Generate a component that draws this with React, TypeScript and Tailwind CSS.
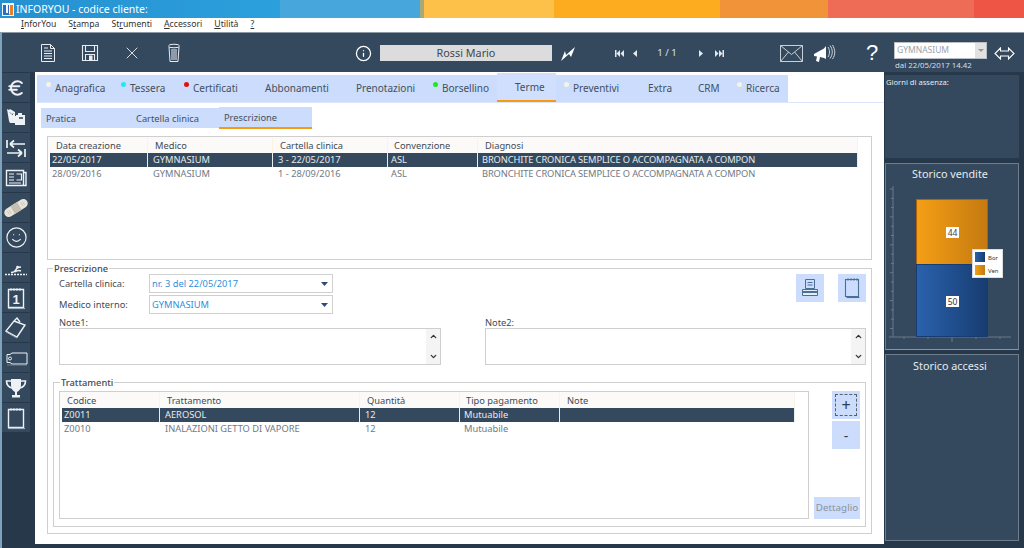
import React from "react";
import { Info, X, Euro, Smile, ChevronUp, ChevronDown } from "lucide-react";

const FONT = { fontFamily: '"Noto Sans", "Open Sans", sans-serif' };

function Dot({ c }: { c: string }) {
  return <span className="absolute left-[-9px] top-[1px] h-[5px] w-[5px] rounded-full" style={{ background: c }} />;
}

const tabs: [string, number, number, string?][] = [
  ["Anagrafica", 85, 18, "#f4f4e6"],
  ["Tessera", 63, 8, "#22e6f2"],
  ["Certificati", 71, 8, "#e01010"],
  ["Abbonamenti", 91, 9],
  ["Prenotazioni", 86, 9],
  ["Borsellino", 64, 9, "#22e622"],
  ["Terme", 59, 18, "#f4f4e6"],
  ["Preventivi", 84, 17, "#f4f4e6"],
  ["Extra", 50, 8],
  ["CRM", 48, 8],
  ["Ricerca", 50, 8, "#f4f4e6"],
];

function TabBar() {
  return (
    <div className="ml-[2px] flex h-[30px] items-end border-b border-[#dbe6fb] text-[10px]">
      <div className="flex h-[27px] w-[751px] items-stretch bg-[#cbdcfd]">
        {tabs.map(([t, w, p, c], i) => (
          <div
            key={t}
            className={
              i === 6
                ? "mt-[-2px] flex h-[29px] items-center border-b-2 border-[#f59a12] bg-[#cfdffd] pt-[2px] text-[#44505c]"
                : "flex items-center text-[#44505c]"
            }
            style={{ width: w, paddingLeft: p }}
          >
            <span className="relative whitespace-nowrap">
              {c && i !== 6 ? <Dot c={c} /> : null}
              {t}
            </span>
          </div>
        ))}
      </div>
    </div>
  );
}

function SubTabs() {
  return (
    <div className="ml-[6px] mt-[4px] flex h-[22px] items-stretch">
      <div className="mt-[1px] flex h-[20px] w-[178px] items-center bg-[#cbdcfd] pt-px text-[#44505c]">
        <span className="ml-[5px] w-[90px]">Pratica</span>
        <span>Cartella clinica</span>
      </div>
      <div className="flex h-[22px] w-[93px] items-center border-b-2 border-[#f59a12] bg-[#cbdcfd] pl-[5px] pt-px text-[#44505c]">
        Prescrizione
      </div>
    </div>
  );
}

type Col = { t: string; w: number; hp: number; cp: number; narrow?: boolean };

function Grid({ cols, rows, rowW, left }: { cols: Col[]; rows: string[][]; rowW: number; left: number }) {
  return (
    <div>
      <div className="flex h-[16px] items-center bg-[#fbfaf8] pt-px text-[#3f4a55]" style={{ width: rowW + left }}>
        <div style={{ width: left }} />
        {cols.map((c) => (
          <div key={c.t} className="flex h-full items-center whitespace-nowrap border-r border-[#fbf2df]" style={{ width: c.w, paddingLeft: c.hp }}>
            {c.t}
          </div>
        ))}
      </div>
      {rows.map((r, i) => (
        <div key={i} className="flex h-[14px] items-center" style={{ marginLeft: left, width: rowW }}>
          {r.map((v, j) => (
            <div
              key={j}
              className={
                (i === 0
                  ? "flex h-full items-center overflow-hidden whitespace-nowrap border-r border-[#e8edf2] bg-[#34495e] text-[#e6ebef]"
                  : "flex h-full items-center overflow-hidden whitespace-nowrap text-[#707a83]") +
                (cols[j].narrow ? " tracking-[-0.12px]" : "")
              }
              style={{ width: cols[j].w, paddingLeft: cols[j].cp }}
            >
              {v}
            </div>
          ))}
        </div>
      ))}
    </div>
  );
}

function SelectBox({ v }: { v: string }) {
  return (
    <div className="flex h-[19px] w-[184px] items-center justify-between border border-[#d0d0d0] bg-white pl-[2px] pr-[4px] text-[#2f8fdc]">
      <span>{v}</span>
      <svg width="7" height="4" viewBox="0 0 7 4"><path d="M0 0h7L3.5 4z" fill="#2f4a78" /></svg>
    </div>
  );
}

function NoteBox({ w }: { w: number }) {
  return (
    <div className="flex h-[37px] justify-end border border-[#cfcfcf] bg-white" style={{ width: w }}>
      <div className="flex w-[14px] flex-col items-center justify-between bg-[#f4f4f4] py-[3px] text-[#333]">
        <ChevronUp size={9} strokeWidth={3.5} />
        <ChevronDown size={9} strokeWidth={3.5} />
      </div>
    </div>
  );
}

function Main() {
  return (
    <div className="h-[472px] w-[849px] bg-white pt-[1px] text-[9.3px]">
      <TabBar />
      <SubTabs />
      <div className="ml-[12px] mt-[7px] h-[124px] w-[825px] border border-[#cfcfcf]">
        <Grid
          left={2}
          rowW={808}
          cols={[
            { t: "Data creazione", w: 98, hp: 6, cp: 2 },
            { t: "Medico", w: 125, hp: 7, cp: 5 },
            { t: "Cartella clinica", w: 115, hp: 7, cp: 5 },
            { t: "Convenzione", w: 90, hp: 6, cp: 3 },
            { t: "Diagnosi", w: 380, hp: 7, cp: 4, narrow: true },
          ]}
          rows={[
            ["22/05/2017", "GYMNASIUM", "3 - 22/05/2017", "ASL", "BRONCHITE CRONICA SEMPLICE O ACCOMPAGNATA A COMPON"],
            ["28/09/2016", "GYMNASIUM", "1 - 28/09/2016", "ASL", "BRONCHITE CRONICA SEMPLICE O ACCOMPAGNATA A COMPON"],
          ]}
        />
      </div>
      <fieldset className="ml-[12px] mt-[3px] h-[271px] w-[825px] border border-[#cfcfcf] pl-[11px] pr-[5px]">
        <legend className="ml-[-6px] px-[1px] font-medium leading-[11px] text-[#3f4a55]">Prescrizione</legend>
        <div className="flex items-start justify-between">
          <div>
            <div className="flex items-center text-[#3f4a55]">
              <span className="w-[90px]">Cartella clinica:</span>
              <SelectBox v="nr. 3 del 22/05/2017" />
            </div>
            <div className="mt-[2px] flex items-center text-[#3f4a55]">
              <span className="w-[90px]">Medico interno:</span>
              <SelectBox v="GYMNASIUM" />
            </div>
          </div>
          <div className="flex gap-[14px]">
            <button className="flex h-[28px] w-[28px] items-center justify-center bg-[#cbdcfd]">
              <svg width="18" height="20" viewBox="0 0 18 20" fill="none" stroke="#4a6f94" strokeWidth="1">
                <path d="M4.5 1.5h9v9h-9zM6.5 4.5h5M6.5 7h5" />
                <path d="M1.5 11.5h15v6h-15z" fill="#e4ecf8" />
                <path d="M1.5 14h15" strokeWidth="2" />
              </svg>
            </button>
            <button className="flex h-[28px] w-[28px] items-center justify-center bg-[#cbdcfd]">
              <svg width="16" height="22" viewBox="0 0 16 22" fill="none" stroke="#4a6f94" strokeWidth="1.1">
                <path d="M1.5 2.5h13v17h-13z" />
                <path d="M2.5 20.5h13" />
                <path d="M4 1v3M7 1v3M10 1v3M13 1v3" strokeWidth="0.8" />
              </svg>
            </button>
          </div>
        </div>
        <div className="flex pt-[3px] text-[#3f4a55]">
          <div className="w-[426px]">
            <div className="h-[11px] leading-[11px]">Note1:</div>
            <NoteBox w={382} />
          </div>
          <div>
            <div className="h-[11px] leading-[11px]">Note2:</div>
            <NoteBox w={381} />
          </div>
        </div>
        <fieldset className="ml-[-6px] mt-[12px] h-[150px] w-[813px] border border-[#cfcfcf] pl-[5px]">
          <legend className="ml-[1px] px-[1px] font-medium leading-[11px] text-[#3f4a55]">Trattamenti</legend>
          <div className="mt-[3px] flex">
            <div className="h-[128px] w-[750px] shrink-0 border border-[#cfcfcf]">
              <Grid
                left={2}
                rowW={733}
                cols={[
                  { t: "Codice", w: 98, hp: 5, cp: 2 },
                  { t: "Trattamento", w: 200, hp: 7, cp: 5 },
                  { t: "Quantità", w: 100, hp: 7, cp: 5 },
                  { t: "Tipo pagamento", w: 100, hp: 6, cp: 4 },
                  { t: "Note", w: 235, hp: 7, cp: 7 },
                ]}
                rows={[
                  ["Z0011", "AEROSOL", "12", "Mutuabile", ""],
                  ["Z0010", "INALAZIONI GETTO DI VAPORE", "12", "Mutuabile", ""],
                ]}
              />
            </div>
            <div className="ml-[5px] flex h-[128px] w-[46px] flex-col items-end">
              <button className="flex h-[28px] w-[28px] items-center justify-center bg-[#cbdcfd] text-[16px] text-[#2e3f50]">
                <span className="flex h-[22px] w-[22px] items-center justify-center border border-dashed border-[#55606b]">+</span>
              </button>
              <button className="mt-[2px] flex h-[28px] w-[28px] items-center justify-center bg-[#cbdcfd] text-[14px] text-[#2e3f50]">-</button>
              <button className="mt-auto flex h-[22px] w-[46px] items-center justify-center bg-[#cbdcfd] text-[9.8px] text-[#8a939b]">Dettaglio</button>
            </div>
          </div>
        </fieldset>
      </fieldset>
    </div>
  );
}

const white = "#eef2f5";

function SideIcon({ i }: { i: number }) {
  const p = { fill: "none", stroke: white, strokeWidth: 1.4 } as const;
  const s = { width: 24, height: 24, viewBox: "0 0 24 24" };
  switch (i) {
    case 0:
      return <Euro size={20} color={white} strokeWidth={2.4} />;
    case 1:
      return (
        <svg {...s}>
          <path d="M3 3l2 1 1-1 5 3v4h1V9h2V7h4v2h3v10H11v-2H6l-1-2-1-6z" fill={white} />
          <path d="M6 6.5l1 1M9 7.5l-1 1.5" stroke="#34495e" strokeWidth="1" />
          <path d="M15 12h4" stroke="#34495e" strokeWidth="1.6" />
        </svg>
      );
    case 2:
      return (
        <svg {...s}>
          <path d="M3 4v8M21 8H6M6 8l4-3.5M6 8l4 3.5M3 17h15M18 17l-4-3.5M18 17l-4 3.5M21 13v8" {...p} strokeWidth={1.7} />
        </svg>
      );
    case 3:
      return (
        <svg {...s}>
          <path d="M2.5 4.5h17v15h-17zM19.5 6.5h2.5v13h-2.5" {...p} />
          <path d="M5 8h5M5 11h5M5 14h5M5 17h12M12.5 8h5v6h-5" {...p} strokeWidth={1.2} />
        </svg>
      );
    case 4:
      return (
        <svg {...s}>
          <g transform="rotate(-32 12 12)">
            <rect x="-1" y="7.5" width="26" height="9" rx="4.5" fill="#e8e4da" />
            <rect x="8" y="7.5" width="8" height="9" fill="#c4bfb0" />
            <path d="M3 10v4M5 10v4M19 10v4M21 10v4" stroke="#c4bfb0" strokeWidth="0.8" />
          </g>
        </svg>
      );
    case 5:
      return <Smile size={23} color={white} strokeWidth={1.2} />;
    case 6:
      return (
        <svg {...s}>
          <path d="M1 18.5h22" stroke={white} strokeWidth="1.3" strokeDasharray="2 1" />
          <path d="M7 16.5c3 0 4-.5 5-3s3-2.5 5-2.5M11 16c2-1.5 4-2 6-1" {...p} strokeWidth={1.5} />
          <circle cx="13.5" cy="11" r="1.3" fill={white} />
        </svg>
      );
    case 7:
      return (
        <svg {...s}>
          <path d="M4.5 3.5h15v18h-15z" {...p} />
          <path d="M4 22.5h17" stroke="#9fb0c0" strokeWidth="1.2" />
          <path d="M7 2v3M10 2v3M13 2v3M16 2v3" stroke={white} strokeWidth="0.8" />
          <text x="12" y="18" textAnchor="middle" fontSize="13" fontWeight="700" fill={white} fontFamily="Liberation Sans, sans-serif">1</text>
        </svg>
      );
    case 8:
      return (
        <svg {...s}>
          <path d="M10 5l11 4-8 12-11-6zM10 5l3-3 3 4" {...p} />
          <path d="M2 16l11 6" stroke="#9fb0c0" strokeWidth="1" />
        </svg>
      );
    case 9:
      return (
        <svg {...s}>
          <path d="M8 7h15v11H8l-2-1.5H3V8.5h3z" {...p} strokeWidth={1} />
          <circle cx="6" cy="12.5" r="1.5" {...p} strokeWidth={1} />
          <path d="M3 19h20" stroke="#7f90a0" strokeWidth="0.8" />
        </svg>
      );
    case 10:
      return (
        <svg {...s}>
          <path d="M7 3h10v6c0 4-2 6-4 7v3h3v2.5H8V19h3v-3c-2-1-4-3-4-7z" fill={white} />
          <path d="M7 5H2.5c0 4 2 6 5.5 7M17 5h4.500c0 4-2 6-5.500 7" {...p} strokeWidth={1.6} />
        </svg>
      );
    default:
      return (
        <svg {...s}>
          <path d="M4.5 3.5h15v18h-15z" {...p} />
          <path d="M4 22.5h17" stroke="#9fb0c0" strokeWidth="1.2" />
          <path d="M7 2v3M10 2v3M13 2v3M16 2v3" stroke={white} strokeWidth="0.8" />
        </svg>
      );
  }
}

function Sidebar() {
  return (
    <div className="flex w-[33px] shrink-0 flex-col pt-px">
      {Array.from({ length: 12 }).map((_, i) => (
        <div key={i} className="mb-px flex h-[29px] w-[28px] items-center justify-center bg-[#34495e]">
          <SideIcon i={i} />
        </div>
      ))}
    </div>
  );
}

function Chart() {
  const ticks: number[] = [];
  for (let i = 0; i < 16; i++) ticks.push(189 + i * 9.3);
  return (
    <svg width="132" height="160" viewBox="886 186 132 160" className="mt-[5px] block">
      <defs>
        <linearGradient id="o" x1="0" x2="1" y1="0" y2="0">
          <stop offset="0" stopColor="#f59f16" />
          <stop offset="1" stopColor="#c57a10" />
        </linearGradient>
        <linearGradient id="b" x1="0" x2="1" y1="0" y2="0">
          <stop offset="0" stopColor="#2a62ad" />
          <stop offset="1" stopColor="#173c70" />
        </linearGradient>
      </defs>
      <path d="M893 186v151M889 337h122" stroke="#66788a" strokeWidth="1" fill="none" />
      {ticks.map((y, i) => (
        <path key={i} d={`M${i % 3 === 0 ? 890 : 891} ${y}h3`} stroke="#66788a" />
      ))}
      <path d="M904 337v2M928 337v2M952 337v5M976 337v2M1000 337v2" stroke="#66788a" />
      <rect x="916.5" y="199.5" width="71" height="65" fill="url(#o)" stroke="#a8650c" />
      <rect x="916.5" y="264.5" width="71" height="72" fill="url(#b)" stroke="#173c70" />
      <rect x="946" y="227" width="13" height="11" fill="#fff" />
      <text x="952.5" y="235.5" fontSize="8.5" textAnchor="middle" fill="#444" fontFamily="Noto Sans, sans-serif">44</text>
      <rect x="946" y="296" width="13" height="11" fill="#fff" />
      <text x="952.5" y="304.5" fontSize="8.5" textAnchor="middle" fill="#333" fontFamily="Noto Sans, sans-serif">50</text>
      <rect x="972.5" y="249.5" width="30" height="28" fill="#fff" stroke="#ddd" />
      <rect x="975" y="252" width="10" height="10" fill="url(#b)" />
      <rect x="975" y="265" width="10" height="10" fill="url(#o)" />
      <text x="988" y="260" fontSize="6" fill="#333" fontFamily="Noto Sans, sans-serif">Bor</text>
      <text x="988" y="273" fontSize="6" fill="#333" fontFamily="Noto Sans, sans-serif">Ven</text>
    </svg>
  );
}

function RightPanel() {
  return (
    <div className="ml-px flex w-[134px] shrink-0 flex-col pt-[3px]">
      <div className="h-[83px] bg-[#34495e] pl-[1px] pt-[2px] text-[7.6px] text-[#e6ebef]">Giorni di assenza:</div>
      <div className="mt-[5px] h-[187px] border border-[#6e7d8c] border-b-[#8a97a3] bg-[#34495e]">
        <div className="h-[17px] pr-[4px] pt-[2px] text-center text-[10.8px] text-[#e6ebef]">Storico vendite</div>
        <Chart />
      </div>
      <div className="mt-[4px] h-[187px] border border-[#6e7d8c] bg-[#34495e] pr-[4px] pt-[3px] text-center text-[10.8px] text-[#e6ebef]">
        Storico accessi
      </div>
    </div>
  );
}

function Toolbar() {
  const c = "#e9edf1";
  return (
    <div className="flex h-[39px] items-center pl-[25px] pt-px text-[#e9edf1]">
      <div className="flex w-[42px] justify-center">
        <svg width="16" height="20" viewBox="0 0 16 20" fill="none" stroke={c} strokeWidth="1">
          <path d="M1.5 1.5h9l4 4v13h-13zM10.5 1.5v4h4" />
          <path d="M4 5h4M4 8h8M4 10.5h8M4 13h8M4 15.5h8" />
        </svg>
      </div>
      <div className="flex w-[42px] justify-center">
        <svg width="18" height="18" viewBox="0 0 18 18" fill="none" stroke={c} strokeWidth="1.1">
          <path d="M1.5 1.5h15v15h-15z" />
          <path d="M4.5 1.5v6h9v-6" />
          <path d="M4.5 16.5v-6h9v6" />
          <rect x="8" y="11.5" width="3.5" height="5" fill={c} stroke="none" />
        </svg>
      </div>
      <div className="flex w-[42px] justify-center"><X size={20} strokeWidth={1.1} color={c} /></div>
      <div className="flex w-[42px] justify-center">
        <svg width="14" height="20" viewBox="0 0 14 20" fill="none" stroke={c} strokeWidth="1">
          <ellipse cx="7" cy="3" rx="5.5" ry="1.8" />
          <path d="M2 4l1 14.5h8L12 4M5 6v11M7 6v11M9 6v11" />
        </svg>
      </div>
      <div className="ml-[153px] flex w-[30px] justify-center"><Info size={17} strokeWidth={1.8} color="#fff" /></div>
      <div className="ml-[2px] flex h-[16px] w-[172px] items-center justify-center bg-[#dcdcdc] text-[10.8px] text-[#3d4853]">Rossi Mario</div>
      <div className="ml-[5px] flex w-[22px] justify-center">
        <svg width="17" height="17" viewBox="0 0 17 17"><path d="M1 16l4-10 1 4 9-8-4 10-2-3-8 7z" fill="#fff" /></svg>
      </div>
      <div className="ml-[31px] flex w-[18px] justify-center">
        <svg width="9" height="7" viewBox="0 0 9 7" fill="#e4e8ec"><path d="M0 0h1.5v7H0zM5 0v7L1.5 3.5zM9 0v7L5.5 3.5z" /></svg>
      </div>
      <div className="flex w-[14px] justify-center">
        <svg width="4" height="7" viewBox="0 0 4 7" fill="#e4e8ec"><path d="M4 0v7L0 3.5z" /></svg>
      </div>
      <div className="ml-[2px] w-[46px] text-center text-[9.5px] text-[#dfe4e9]">1 / 1</div>
      <div className="ml-[4px] flex w-[14px] justify-center">
        <svg width="4" height="7" viewBox="0 0 4 7" fill="#e4e8ec"><path d="M0 0v7l4-3.5z" /></svg>
      </div>
      <div className="ml-[2px] flex w-[18px] justify-center">
        <svg width="9" height="7" viewBox="0 0 9 7" fill="#e4e8ec"><path d="M0 0v7l3.5-3.5zM4 0v7l3.5-3.5zM7.5 0H9v7H7.5z" /></svg>
      </div>
      <div className="ml-[51px] flex w-[24px] justify-center">
        <svg width="23" height="17" viewBox="0 0 23 17" fill="none" stroke="#c9d0d6" strokeWidth="1">
          <path d="M.5.5h22v16H.5zM.5.5l11 9 11-9M.5 16.5l8-9.5M22.5 16.5l-8-9.5" />
        </svg>
      </div>
      <div className="ml-[9px] flex w-[24px] justify-center">
        <svg width="23" height="20" viewBox="0 0 23 20" fill="none">
          <path d="M1 11l10-5.5L13 3v13l-2-1-4-1-1 5-3-1 1-4.5-3-.5z" fill="#fff" />
          <path d="M15 4c2 3 2 7 0 10M17 2.5c3 4 3 9 0 13M19.5 2c3 5 3 10 0 14" stroke="#cfd6dc" strokeWidth="1" />
        </svg>
      </div>
      <div className="ml-[24px] flex w-[24px] justify-center text-[22px] leading-none text-white" style={{ fontFamily: '"Liberation Sans", sans-serif' }}>?</div>
      <div className="ml-[10px] flex w-[100px] flex-col pt-[5px]">
        <div className="flex h-[17px] w-[93px] items-center justify-between border border-[#b8bec4] bg-white pl-[2px] text-[8.5px] text-[#9aa3ab]">
          GYMNASIUM
          <span className="flex h-full w-[11px] items-center justify-center bg-[#e2e2e2]">
            <svg width="6" height="3" viewBox="0 0 6 3"><path d="M0 0h6L3 3z" fill="#999" /></svg>
          </span>
        </div>
        <div className="mt-[1px] pl-[1px] text-[7.8px] leading-[10px] text-[#d8dee4]">dal 22/05/2017 14.42</div>
      </div>
      <svg width="21" height="13" viewBox="0 0 21 13" fill="none" stroke="#fff" strokeWidth="1.1">
        <path d="M6.5 1L1 6.5 6.5 12V9h8v3L20 6.5 14.5 1v3h-8z" />
      </svg>
    </div>
  );
}

export default function App() {
  return (
    <div className="flex h-[548px] w-[1024px] flex-col overflow-hidden bg-[#263849] text-[10px]" style={FONT}>
      <div className="relative flex h-[18px] shrink-0">
        <div className="w-[280px] bg-gradient-to-r from-[#2690d0] to-[#2ba0dc]" />
        <div className="w-[140px] bg-[#47a6dc]" />
        <div className="w-[4px] bg-[#a8a878]" />
        <div className="w-[130px] bg-[#fdc14a]" />
        <div className="w-[166px] bg-[#feac1f]" />
        <div className="w-[108px] bg-[#f19339]" />
        <div className="w-[146px] bg-[#ee6b56]" />
        <div className="flex-1 bg-[#ee5545]" />
        <div className="absolute left-[2px] top-[2px] flex items-center text-[10.5px] leading-[14px] text-white">
          <svg width="12" height="13" viewBox="0 0 12 13" className="mr-[2px]">
            <rect width="12" height="13" fill="#f3f6fa" />
            <path d="M1 2h3v8h2V2h1v10H1z" fill="#2a6fc0" />
            <path d="M8 2h3v10H7v-1h1z" fill="#ef7d22" />
          </svg>
          INFORYOU - codice cliente:
        </div>
      </div>
      <div className="flex h-[14px] shrink-0 items-center bg-white pl-[21px] text-[8.7px] text-[#333]">
        <span className="mr-[12px]"><u>I</u>nforYou</span>
        <span className="mr-[12px]">S<u>t</u>ampa</span>
        <span className="mr-[12px]">St<u>r</u>umenti</span>
        <span className="mr-[12px]"><u>A</u>ccessori</span>
        <span className="mr-[12px]"><u>U</u>tilità</span>
        <span><u>?</u></span>
      </div>
      <div className="flex min-h-0 flex-1 flex-col border-l-2 border-t border-l-[#7fa2bd] border-t-[#8d99a5]">
        <div className="bg-[#34495e]">
          <Toolbar />
        </div>
        <div className="flex flex-1">
          <Sidebar />
          <Main />
          <RightPanel />
        </div>
      </div>
    </div>
  );
}
